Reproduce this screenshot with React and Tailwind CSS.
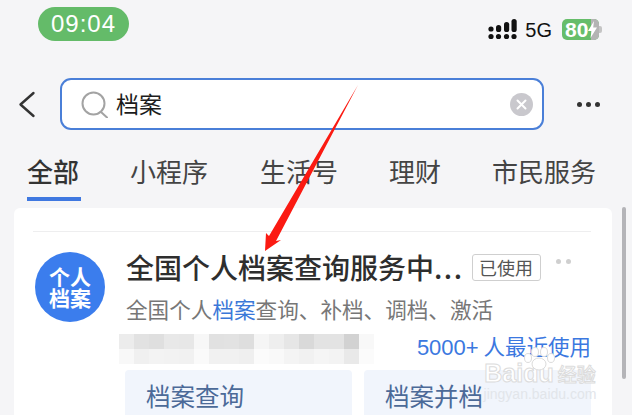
import React from 'react';

const font = "font-['Noto_Sans_CJK_SC','Liberation_Sans',sans-serif]";

const tabs = [
  { label: '小程序', cls: 'w-[78px] ml-[49px]' },
  { label: '生活号', cls: 'w-[78px] ml-[52px]' },
  { label: '理财', cls: 'w-[52px] ml-[51px]' },
  { label: '市民服务', cls: 'w-[104px] ml-[51px]' },
];

const mosaicTop = ['#ececec', '#e2e2e2', '#dfdfdf', '#e8e8e8', '#e7e7e7', '#f7f7f7', '#e1e1e1', '#e2e2e2', '#dedede', '#f5f5f5', '#eeeeee', '#e6e6e6', '#d9d9d9', '#e3e3e3', '#e3e3e3', '#d2d2d2', '#f8f8f8'];
const mosaicBottom = ['#f8f8f8', '#f0f0f0', '#f3f3f3', '#f2f2f2', '#f1f1f1', '#fafafa', '#f1f1f1', '#f1f1f1', '#efefef', '#fbfbfb', '#f9f9f9', '#f4f4f4', '#f1f1f1', '#f5f5f5', '#f3f3f3', '#e9e9e9', '#fbfbfb'];

const Signal = () => (
  <svg width="30" height="21" viewBox="0 0 30 21" fill="#111">
    <circle cx="3" cy="10" r="2.6" />
    <circle cx="3" cy="17.5" r="2.6" />
    <rect x="8" y="6" width="5.2" height="7" rx="2.6" />
    <circle cx="10.5" cy="17.5" r="2.6" />
    <rect x="16" y="3" width="5.2" height="10" rx="2.6" />
    <circle cx="18.5" cy="17.5" r="2.6" />
    <rect x="23.5" y="0" width="5.2" height="13" rx="2.6" />
    <circle cx="26" cy="17.5" r="2.6" />
  </svg>
);

const Battery = () => (
  <div className="relative flex h-[21px] w-[37px] items-center overflow-hidden rounded-[5px] bg-[#66bd6a]">
    <span className="pl-[3px] text-[21px] font-bold leading-none text-white font-['Liberation_Sans',sans-serif]">80</span>
    <div className="absolute right-0 top-0 h-full w-[8px] bg-[#b4b4b4]" />
    <svg className="absolute right-[1px] top-[2px]" width="11" height="17" viewBox="0 0 11 17" fill="#fff">
      <path d="M7 0 1 10h3.5L3.5 17 10 6.5H6.2z" />
    </svg>
  </div>
);

const BackIcon = () => (
  <svg width="18" height="27" viewBox="0 0 18 27" fill="none" stroke="#333" strokeWidth="2.4" strokeLinecap="round" strokeLinejoin="round">
    <path d="M15.5 2 2.5 13.5l13 11.5" />
  </svg>
);

const SearchIcon = () => (
  <svg width="27" height="27" viewBox="0 0 27 27" fill="none" stroke="#a3a3a3" strokeWidth="2">
    <circle cx="12.5" cy="12.5" r="11" />
    <path d="M20 21l6 5.5" strokeLinecap="round" />
  </svg>
);

const Arrow = () => (
  <svg className="absolute left-[255px] top-[80px]" width="110" height="176" viewBox="255 80 110 176" fill="#fb1a12">
    <polygon points="358,85 276,241 281,240 265,251 266,233 269,236" />
  </svg>
);

const Paw = () => (
  <svg className="absolute left-[38px] top-[-14px]" width="34" height="24" viewBox="0 0 34 24" fill="#fff" stroke="#dcdcdc" strokeWidth="1">
    <ellipse cx="6" cy="11" rx="3.5" ry="4.5" />
    <ellipse cx="13" cy="5" rx="3.5" ry="4.5" />
    <ellipse cx="22" cy="5" rx="3.5" ry="4.5" />
    <ellipse cx="29" cy="11" rx="3.5" ry="4.5" />
    <ellipse cx="17" cy="17" rx="7" ry="6" />
  </svg>
);

export default function App() {
  return (
    <div className={`relative h-[415px] w-[632px] overflow-hidden bg-[#f5f5f7] ${font}`}>
      {/* status bar */}
      <div className="flex h-[78px] items-start pl-[38px] pr-[30px]">
        <div className="mt-[7px] flex h-[34px] w-[91px] items-center justify-center rounded-[17px] bg-[#64bb69] text-[24px] tracking-[1px] text-white font-['Liberation_Sans',sans-serif]">
          09:04
        </div>
        <div className="ml-auto mt-[19px] flex items-center">
          <Signal />
          <span className="ml-[7px] text-[20px] leading-none text-[#111] font-['Liberation_Sans',sans-serif]">5G</span>
          <div className="ml-[10px]"><Battery /></div>
          <div className="h-[7px] w-[3px] rounded-r-[2px] bg-[#c4c4c4]" />
        </div>
      </div>

      {/* search row */}
      <div className="flex h-[52px] items-center pl-[18px]">
        <BackIcon />
        <div className="ml-[24px] flex h-[52px] w-[484px] items-center rounded-[11px] border-2 border-[#4a7fd8] bg-white pl-[19px] pr-[9px]">
          <SearchIcon />
          <span className="ml-[8px] -mt-[2px] text-[23px] leading-none text-[#1c1c1c]">档案</span>
          <div className="ml-auto flex h-[23px] w-[23px] items-center justify-center rounded-full bg-[#c9c8cd]">
            <svg width="11" height="11" viewBox="0 0 11 11" stroke="#fff" strokeWidth="2" strokeLinecap="round">
              <path d="M1.5 1.5l8 8M9.5 1.5l-8 8" />
            </svg>
          </div>
        </div>
        <div className="ml-[33px] flex gap-[4px]">
          <span className="h-[5px] w-[5px] rounded-full bg-[#333]" />
          <span className="h-[5px] w-[5px] rounded-full bg-[#333]" />
          <span className="h-[5px] w-[5px] rounded-full bg-[#333]" />
        </div>
      </div>

      {/* tabs */}
      <div className="flex h-[78px] items-start pl-[27px] pt-[24px]">
        <div className="flex w-[54px] flex-col">
          <span className="text-[26px] font-medium leading-[34px] text-[#333]">全部</span>
          <div className="mt-[9px] h-[4px] w-[54px] bg-[#3f78e0]" />
        </div>
        {tabs.map((tab) => (
          <span key={tab.label} className={`${tab.cls} whitespace-nowrap text-[26px] leading-[34px] text-[#444]`}>
            {tab.label}
          </span>
        ))}
      </div>

      {/* result card */}
      <div className="ml-[14px] h-[208px] w-[598px] rounded-t-[6px] bg-white pl-[19px] pr-[21px] pt-[23px]">
        <div className="h-[1px] bg-[#eeeeef]" />
        <div className="flex pl-[2px] pt-[20px]">
          <div className="flex h-[70px] w-[70px] shrink-0 flex-col items-center justify-center rounded-full bg-[#3b7ded] text-[21px] font-bold leading-[21px] text-white">
            <span>个人</span>
            <span>档案</span>
          </div>
          <div className="ml-[21px] min-w-0 flex-1">
            <div className="-mt-[1px] flex items-center">
              <span className="whitespace-nowrap text-[28px] font-medium leading-[32px] text-[#2e2e2e]">
                全国个人档案查询服务中<span className="tracking-[1.5px]">...</span>
              </span>
              <span className="ml-[8px] flex h-[27px] w-[69px] items-center justify-center rounded-[3px] border border-[#cfcfcf] text-[18px] leading-none text-[#555]">已使用</span>
              <div className="mb-[12px] ml-[15px] flex gap-[5px]">
                <span className="h-[5px] w-[5px] rounded-full bg-[#cfcfcf]" />
                <span className="h-[5px] w-[5px] rounded-full bg-[#cfcfcf]" />
              </div>
            </div>
            <div className="mt-[12px] whitespace-nowrap text-[21.6px] leading-[28px] text-[#777]">
              全国个人<span className="text-[#3b78d8]">档案</span>查询、补档、调档、激活
            </div>
          </div>
        </div>

        <div className="mt-[8px] flex items-start">
          <div className="ml-[86px] mt-[3px] flex flex-col">
            <div className="flex">
              {mosaicTop.map((c, i) => (
                <div key={i} className="h-[15px] w-[15px]" style={{ backgroundColor: c }} />
              ))}
            </div>
            <div className="flex">
              {mosaicBottom.map((c, i) => (
                <div key={i} className="h-[15px] w-[15px]" style={{ backgroundColor: c }} />
              ))}
            </div>
          </div>
          <span className="ml-auto whitespace-nowrap text-[21.5px] leading-[30px] text-[#3b78e0]">
            <span className="text-[22px] font-['Liberation_Sans',sans-serif]">5000+</span> 人最近使用
          </span>
        </div>

        <div className="mt-[6px] flex gap-[12px] pl-[92px]">
          <div className="h-[46px] w-[227px] rounded-t-[4px] bg-[#f1f5fc] pl-[21px] pt-[10px] text-[24.5px] leading-[32px] text-[#4c6a98]">档案查询</div>
          <div className="h-[46px] w-[227px] rounded-t-[4px] bg-[#f1f5fc] pl-[21px] pt-[10px] text-[24.5px] leading-[32px] text-[#4c6a98]">档案并档</div>
        </div>
      </div>

      {/* scrollbar */}
      <div className="absolute left-[622px] top-[207px] h-[172px] w-[4px] rounded-full bg-[#b4b4b8]" />

      {/* annotation arrow */}
      <Arrow />

      {/* watermark */}
      <div className="absolute left-[484px] top-[361px] flex w-[112px] flex-col items-center font-['Liberation_Sans',sans-serif]">
        <Paw />
        <div className="flex items-center text-[25px] font-bold leading-[25px] text-white [-webkit-text-stroke:1px_#dcdcdc]">
          <span>Baidu</span>
          <span className="ml-[4px] text-[19px] font-medium font-['Noto_Sans_CJK_SC',sans-serif]">经验</span>
        </div>
        <span className="text-[14px] leading-[16px] text-[#e2e5ea]">jingyan.baidu.com</span>
      </div>
    </div>
  );
}
